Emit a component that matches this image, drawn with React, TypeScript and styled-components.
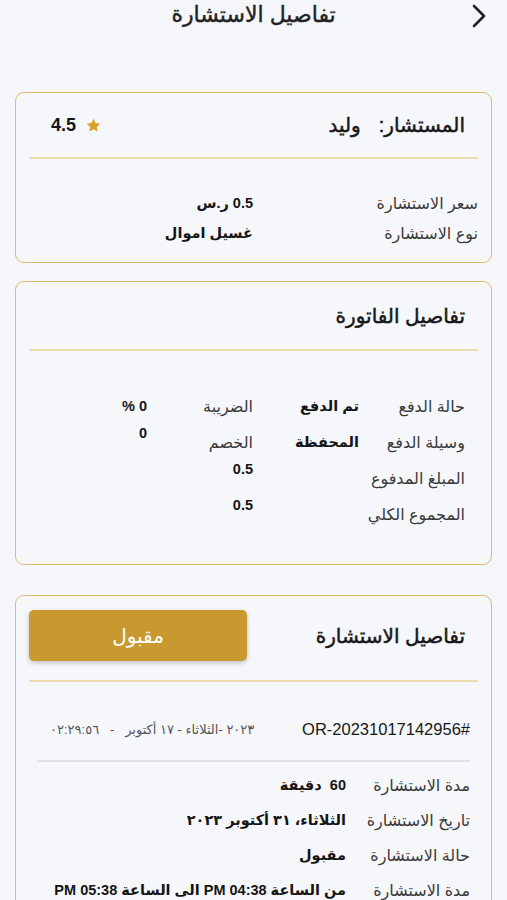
import React from "react";
import styled, { createGlobalStyle } from "styled-components";

const GlobalStyle = createGlobalStyle`
  html, body {
    margin: 0;
    padding: 0;
    background: #f4f6fa;
  }
  body {
    font-family: "Liberation Sans", "DejaVu Sans", sans-serif;
    color: #151515;
  }
`;

const Page = styled.div`
  direction: rtl;
  width: 507px;
  height: 900px;
  overflow: hidden;
  background: #f4f6fa;
`;

const Header = styled.header`
  height: 30px;
  display: flex;
  align-items: center;
  justify-content: center;
  position: relative;
  margin-bottom: 62px;
`;

const HeaderTitle = styled.h1`
  margin: 0;
  font-size: 22px;
  font-weight: 400;
  -webkit-text-stroke: 0.4px #222;
  color: #222;
`;

const BackButton = styled.button`
  position: absolute;
  right: 18px;
  top: 3px;
  border: none;
  background: none;
  padding: 0;
  display: flex;
`;

const Card = styled.section<{ $gap: number }>`
  margin: 0 15px ${(p) => p.$gap}px;
  border: 1.5px solid #dcbb6e;
  border-radius: 9px;
  padding: 0 13px;
  background: #f5f7fb;
`;

const GoldDivider = styled.div`
  height: 2px;
  background: #eedcae;
`;

const ConsultantRow = styled.div`
  height: 64px;
  display: flex;
  align-items: center;
  justify-content: space-between;
  padding: 0 13px 0 22px;
`;

const ConsultantName = styled.div`
  display: flex;
  gap: 18px;
  font-size: 20px;
  font-weight: 400;
  -webkit-text-stroke: 0.5px #181818;
  color: #181818;
`;

const Rating = styled.div`
  display: flex;
  align-items: center;
  gap: 9px;
  font-size: 18px;
  font-weight: 700;
  direction: ltr;
`;

const InfoList = styled.div<{ $top: number; $bottom: number; $label: number; $row: number }>`
  display: grid;
  grid-template-columns: ${(p) => p.$label}px auto;
  grid-auto-rows: ${(p) => p.$row}px;
  align-items: center;
  padding: ${(p) => p.$top}px 0 ${(p) => p.$bottom}px;
`;

const Label = styled.div`
  font-size: 16px;
  color: #3a3a3a;
  white-space: nowrap;
`;

const Value = styled.div`
  font-size: 14.5px;
  font-weight: 700;
  color: #151515;
  white-space: nowrap;
`;

const CardTitle = styled.h2<{ $height: number }>`
  margin: 0;
  height: ${(p) => p.$height}px;
  display: flex;
  align-items: center;
  padding-right: 13px;
  font-size: 20px;
  font-weight: 400;
  -webkit-text-stroke: 0.5px #181818;
  color: #181818;
`;

const InvoiceGrid = styled.div`
  display: flex;
  flex-direction: column;
  padding: 37px 13px 32px 0;
`;

const InvoiceRow = styled.div`
  display: grid;
  grid-template-columns: repeat(4, 106px);
  height: 36px;
  align-items: center;
`;

const InvoiceValue = styled(Value)<{ $lift?: boolean }>`
  align-self: ${(p) => (p.$lift ? "start" : "center")};
  padding-top: ${(p) => (p.$lift ? "1px" : "0")};
`;

const DetailsHeader = styled.div`
  display: flex;
  align-items: center;
  justify-content: space-between;
  padding: 14px 0 19px;
`;

const StatusButton = styled.button`
  width: 218px;
  height: 51px;
  border: none;
  border-radius: 5px;
  background: #c9992f;
  color: #fff;
  font-family: inherit;
  font-size: 20px;
  font-weight: 400;
  box-shadow: 0 2px 5px rgba(0, 0, 0, 0.22);
`;

const OrderSection = styled.div`
  padding: 0 8px;
`;

const OrderRow = styled.div`
  height: 40px;
  margin-top: 27px;
  margin-bottom: 11px;
  display: flex;
  align-items: center;
  justify-content: space-between;
  padding-left: 13px;
`;

const OrderNumber = styled.div`
  font-size: 16.5px;
  font-weight: 500;
  color: #181818;
`;

const OrderDate = styled.div`
  font-size: 13px;
  color: #555;
  white-space: nowrap;
`;

const GrayDivider = styled.div`
  height: 1.5px;
  background: #dfe2e8;
`;

const BackIcon = () => (
  <svg width="20" height="26" viewBox="0 0 20 26">
    <polyline points="5,3 15,13 5,23" fill="none" stroke="#222" strokeWidth="2.6" strokeLinecap="round" strokeLinejoin="round" />
  </svg>
);

const Star = () => (
  <svg width="17" height="17" viewBox="0 0 24 24">
    <path d="M12 2.5l2.9 6.1 6.6.8-4.9 4.6 1.3 6.6L12 17.3l-5.9 3.3 1.3-6.6-4.9-4.6 6.6-.8z" fill="#d6a22c" />
  </svg>
);

const App: React.FC = () => {
  return (
    <Page>
      <GlobalStyle />
      <Header>
        <BackButton>
          <BackIcon />
        </BackButton>
        <HeaderTitle>تفاصيل الاستشارة</HeaderTitle>
      </Header>

      <Card $gap={18}>
        <ConsultantRow>
          <ConsultantName>
            <span>المستشار:</span>
            <span>وليد</span>
          </ConsultantName>
          <Rating>
            <span>4.5</span>
            <Star />
          </Rating>
        </ConsultantRow>
        <GoldDivider />
        <InfoList $top={29} $bottom={14} $label={225} $row={30}>
          <Label>سعر الاستشارة</Label>
          <Value>0.5 ر.س</Value>
          <Label>نوع الاستشارة</Label>
          <Value>غسيل اموال</Value>
        </InfoList>
      </Card>

      <Card $gap={30}>
        <CardTitle $height={67}>تفاصيل الفاتورة</CardTitle>
        <GoldDivider />
        <InvoiceGrid>
          <InvoiceRow>
            <Label>حالة الدفع</Label>
            <Value>تم الدفع</Value>
            <Label>الضريبة</Label>
            <Value>0 %</Value>
          </InvoiceRow>
          <InvoiceRow>
            <Label>وسيلة الدفع</Label>
            <Value>المحفظة</Value>
            <Label>الخصم</Label>
            <InvoiceValue $lift>0</InvoiceValue>
          </InvoiceRow>
          <InvoiceRow>
            <Label>المبلغ المدفوع</Label>
            <span />
            <InvoiceValue $lift>0.5</InvoiceValue>
          </InvoiceRow>
          <InvoiceRow>
            <Label>المجموع الكلي</Label>
            <span />
            <InvoiceValue $lift>0.5</InvoiceValue>
          </InvoiceRow>
        </InvoiceGrid>
      </Card>

      <Card $gap={18}>
        <DetailsHeader>
          <CardTitle $height={51}>تفاصيل الاستشارة</CardTitle>
          <StatusButton>مقبول</StatusButton>
        </DetailsHeader>
        <GoldDivider />
        <OrderSection>
          <OrderRow>
            <OrderNumber>#OR-20231017142956</OrderNumber>
            <OrderDate>٢٠٢٣ -الثلاثاء - ١٧ أكتوبر &nbsp; - &nbsp; ٠٢:٢٩:٥٦</OrderDate>
          </OrderRow>
          <GrayDivider />
          <InfoList $top={6} $bottom={20} $label={124} $row={35}>
            <Label>مدة الاستشارة</Label>
            <Value>60 &nbsp;دقيقة</Value>
            <Label>تاريخ الاستشارة</Label>
            <Value>الثلاثاء، ٣١ أكتوبر ٢٠٢٣</Value>
            <Label>حالة الاستشارة</Label>
            <Value>مقبول</Value>
            <Label>مدة الاستشارة</Label>
            <Value>من الساعة 04:38 PM الى الساعة 05:38 PM</Value>
          </InfoList>
        </OrderSection>
      </Card>
    </Page>
  );
};

export default App;
